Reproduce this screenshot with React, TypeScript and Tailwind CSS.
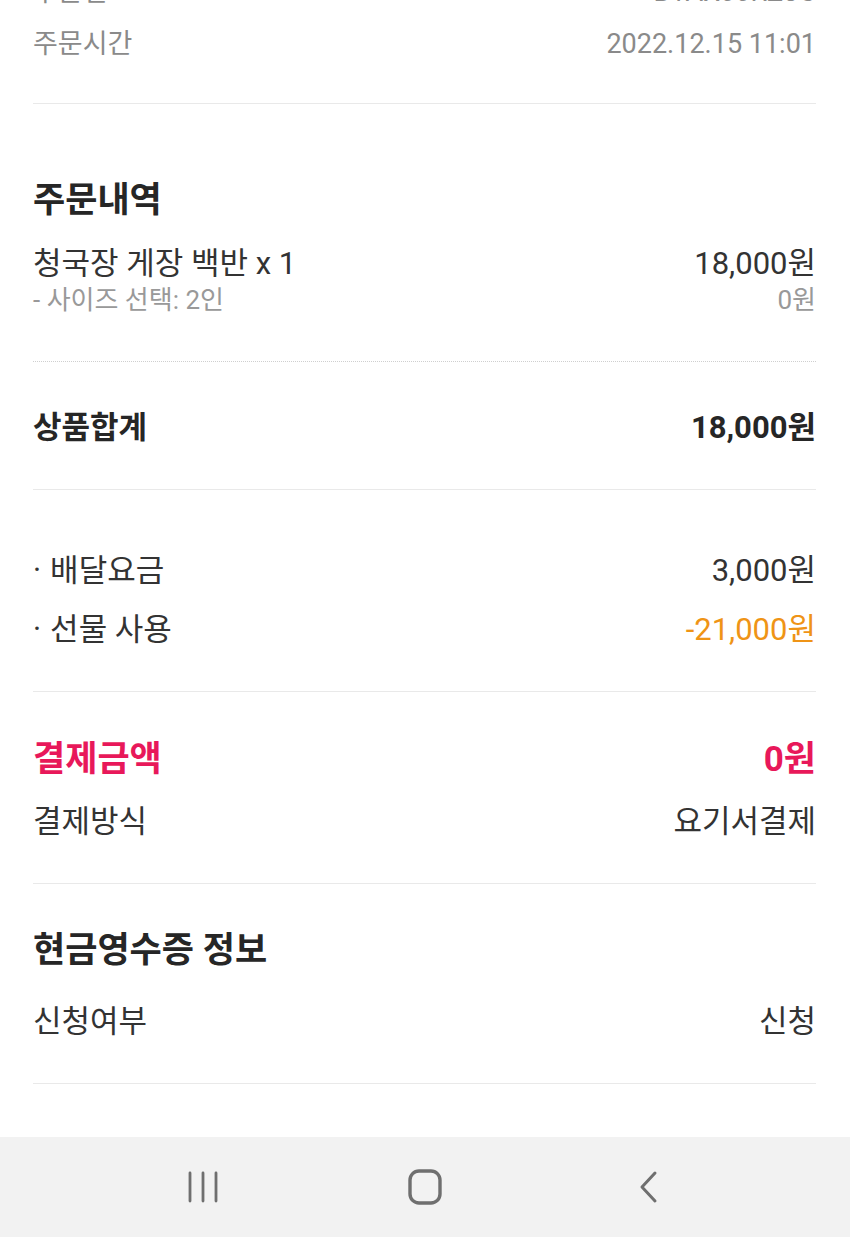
const font = { fontFamily: '"Roboto", "Noto Sans CJK KR", sans-serif' };

function Row({
  label,
  value,
  className = "",
}: {
  label: React.ReactNode;
  value: React.ReactNode;
  className?: string;
}) {
  return (
    <div className={`flex items-center justify-between h-[40px] leading-none ${className}`}>
      <span>{label}</span>
      <span>{value}</span>
    </div>
  );
}

function Divider() {
  return <div className="h-px bg-[#e9e9e9]" />;
}

function NavBar() {
  return (
    <nav className="h-[100px] shrink-0 bg-[#f2f2f2] flex items-center justify-between px-[186px]">
      <svg width="34" height="34" viewBox="0 0 34 34" fill="none" stroke="#6f6f6f" strokeWidth="2.8" strokeLinecap="round">
        <line x1="4" y1="3" x2="4" y2="31" />
        <line x1="17" y1="3" x2="17" y2="31" />
        <line x1="30" y1="3" x2="30" y2="31" />
      </svg>
      <svg width="36" height="36" viewBox="0 0 36 36" fill="none" stroke="#6f6f6f" strokeWidth="3.4">
        <rect x="3" y="2" width="30" height="32" rx="9" />
      </svg>
      <svg width="34" height="34" viewBox="0 0 34 34" fill="none" stroke="#6f6f6f" strokeWidth="3" strokeLinecap="round" strokeLinejoin="round">
        <polyline points="25,3 12,17 25,31" />
      </svg>
    </nav>
  );
}

export default function App() {
  return (
    <div className="h-[1237px] w-[850px] bg-white flex flex-col overflow-hidden" style={font}>
      <main className="flex-1 overflow-hidden pl-[33px] pr-[34px]">
        {/* order info, scrolled past the top */}
        <section className="-mt-[34px] text-[27px] text-[#8a8a8a] leading-none">
          <div className="flex items-center justify-between h-[52px]">
            <span>주문번호</span>
            <span>B1AX00RZ3C</span>
          </div>
          <div className="flex items-center justify-between h-[52px]">
            <span>주문시간</span>
            <span>2022.12.15 11:01</span>
          </div>
        </section>
        <div className="mt-[33px]">
          <Divider />
        </div>

        <section className="leading-none">
          <h2 className="mt-[74px] h-[44px] flex items-center text-[35px] font-bold text-[#262626]">
            주문내역
          </h2>
          <div className="mt-[23px] h-[36px] flex items-center justify-between text-[31px] text-[#333]">
            <span>청국장 게장 백반 x 1</span>
            <span>18,000원</span>
          </div>
          <div className="h-[32px] mt-[3px] flex items-center justify-between text-[26px] text-[#999]">
            <span>- 사이즈 선택: 2인</span>
            <span>0원</span>
          </div>
        </section>
        <div className="mt-[45px] border-t border-dotted border-[#cfcfcf]" />

        <Row
          className="mt-[45px] text-[31px] font-bold text-[#262626]"
          label="상품합계"
          value="18,000원"
        />
        <div className="mt-[42px]">
          <Divider />
        </div>

        <div className="text-[31px] text-[#333]">
          <Row className="mt-[60px]" label={<><span className="mr-[9px]">·</span>배달요금</>} value="3,000원" />
          <Row
            className="mt-[19px]"
            label={<><span className="mr-[9px]">·</span>선물 사용</>}
            value={<span className="text-[#ef9416]">-21,000원</span>}
          />
        </div>
        <div className="mt-[42px]">
          <Divider />
        </div>

        <Row
          className="mt-[47px] text-[35px] font-bold text-[#e8185a]"
          label="결제금액"
          value="0원"
        />
        <Row className="mt-[22px] text-[31px] text-[#333]" label="결제방식" value="요기서결제" />
        <div className="mt-[42px]">
          <Divider />
        </div>

        <h2 className="mt-[46px] h-[40px] flex items-center leading-none text-[35px] font-bold text-[#262626]">
          현금영수증 정보
        </h2>
        <Row className="mt-[31px] text-[31px] text-[#333]" label="신청여부" value="신청" />
        <div className="mt-[42px]">
          <Divider />
        </div>
      </main>
      <NavBar />
    </div>
  );
}
